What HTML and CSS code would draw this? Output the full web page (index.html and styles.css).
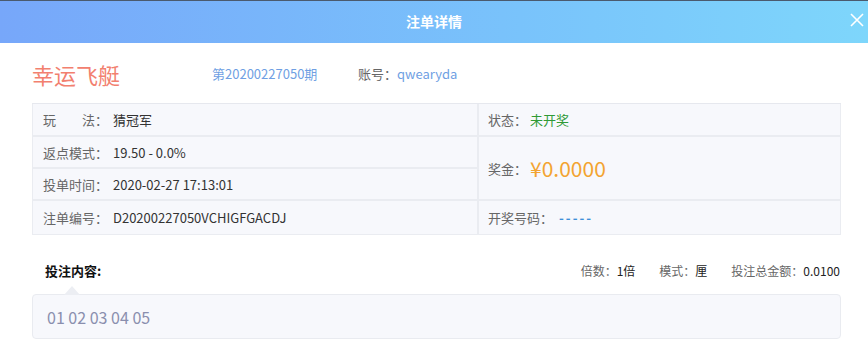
FILE: index.html
```html
<!DOCTYPE html>
<html>
  <head>
    <meta charset="UTF-8">
    <title>注单详情</title>
    <link rel="stylesheet" href="styles.css">
  </head>
  <body>
    <div class="modal">
      <div class="modalHead">
        <span></span>
        <span class="modalTitle">注单详情</span>
        <span class="modalClose">
          <svg width="14" height="14" viewBox="0 0 14 14">
            <path d="M1 1 L13 13 M13 1 L1 13" stroke="#fff" stroke-width="1.6" fill="none"/>
          </svg>
        </span>
      </div>
      <div class="modalBody">
        <div class="gameRow">
          <span class="gameName">幸运飞艇</span>
          <span class="issue">第20200227050期</span>
          <span class="account"><span class="lbl">账号：</span><span class="blue">qwearyda</span></span>
        </div>
        <div class="infoGrid">
          <div class="cell left r1"><span class="lbl wide">玩　　法：</span><span class="val">猜冠军</span></div>
          <div class="cell right r1"><span class="lbl">状态：</span><span class="val green">未开奖</span></div>
          <div class="cell left r2"><span class="lbl wide">返点模式：</span><span class="val">19.50 - 0.0%</span></div>
          <div class="cell right prize"><span class="lbl">奖金：</span><span class="money">¥0.0000</span></div>
          <div class="cell left r3"><span class="lbl wide">投单时间：</span><span class="val">2020-02-27 17:13:01</span></div>
          <div class="cell left r4"><span class="lbl wide">注单编号：</span><span class="val">D20200227050VCHIGFGACDJ</span></div>
          <div class="cell right r4"><span class="lbl">开奖号码：</span><span class="dashes">-----</span></div>
        </div>
        <div class="betHead">
          <span class="betTitle">投注内容:</span>
          <div class="betMeta">
            <span><span class="lbl">倍数：</span>1倍</span>
            <span><span class="lbl">模式：</span>厘</span>
            <span><span class="lbl">投注总金额：</span>0.0100</span>
          </div>
        </div>
        <div class="betBox">01 02 03 04 05</div>
      </div>
    </div>
  </body>
</html>
```

FILE: styles.css
```css
body {
    margin: 0;
    background-color: #fff;
    font-family: "Noto Sans CJK SC", "Microsoft YaHei", sans-serif;
    color: #333;
}
.modal {
    width: 868px;
}
.modalHead {
    height: 42px;
    border-top: 1px solid #4a5a6e;
    display: grid;
    grid-template-columns: 1fr auto 1fr;
    align-items: center;
    background: linear-gradient(90deg, #77a7fa 0%, #79c3fb 60%, #7ed6fb 100%);
}
.modalTitle {
    color: #fff;
    font-size: 14px;
    font-weight: bold;
    padding-bottom: 3px;
}
.modalClose {
    justify-self: end;
    display: flex;
    padding-right: 4px;
    padding-bottom: 4px;
}
.modalBody {
    padding: 0 27px 0 32px;
}
.gameRow {
    height: 60px;
    display: flex;
    align-items: center;
    border-bottom: 1px solid #e6e8ee;
    font-size: 13px;
}
.gameName {
    width: 180px;
    font-size: 22px;
    color: #f2806f;
    padding-top: 2px;
}
.issue {
    width: 146px;
    color: #6f9fe3;
}
.lbl {
    color: #666;
}
.blue {
    color: #6f9fe3;
}
.infoGrid {
    display: grid;
    grid-template-columns: 444px 1fr;
    grid-template-rows: 31px 30px 30px 33px;
    gap: 2px;
    background-color: #eaecf1;
    border: 1px solid #eaecf1;
    border-top: none;
    font-size: 13px;
}
.cell {
    background-color: #f7f8fc;
    display: flex;
    align-items: center;
}
.left {
    padding-left: 10px;
    grid-column: 1;
}
.right {
    padding-left: 9px;
    grid-column: 2;
}
.r1 { grid-row: 1; }
.r2 { grid-row: 2; }
.r3 { grid-row: 3; }
.r4 { grid-row: 4; }
.prize {
    grid-row: 2 / 4;
}
.wide {
    width: 70px;
}
.green {
    color: #2f9a35;
    margin-left: 3px;
}
.money {
    color: #f3a431;
    font-size: 21px;
    margin-left: 3px;
}
.dashes {
    color: #3d8fd8;
    font-weight: bold;
    letter-spacing: 2px;
    margin-left: 6px;
}
.betHead {
    margin-top: 25px;
    height: 20px;
    display: flex;
    justify-content: space-between;
    align-items: center;
}
.betTitle {
    font-size: 13px;
    font-weight: bold;
    color: #111;
    padding-left: 13px;
}
.betMeta {
    display: flex;
    gap: 24px;
    font-size: 12px;
    color: #222;
    padding-right: 1px;
}
.betBox {
    position: relative;
    margin-top: 14px;
    height: 43px;
    border: 1px solid #e9ebf0;
    border-radius: 4px;
    background-color: #f7f8fc;
    display: flex;
    align-items: center;
    padding-left: 14px;
    font-size: 16px;
    color: #8a8fae;
}
.betBox::before {
    content: "";
    position: absolute;
    top: -9px;
    left: 31px;
    border-width: 0 8px 9px 8px;
    border-style: solid;
    border-color: transparent transparent #eceef3 transparent;
}
```
